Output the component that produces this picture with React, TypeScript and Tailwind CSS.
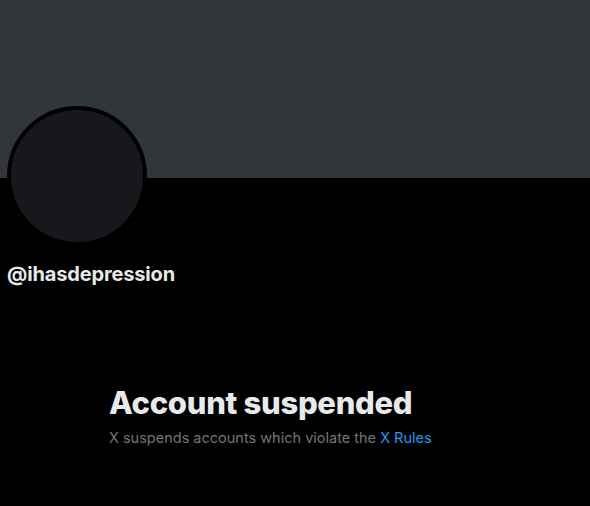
export default function App() {
  return (
    <div className="h-[506px] w-full overflow-hidden bg-black font-['Inter',sans-serif]">
      <div className="h-[178px] bg-[#333639]" />
      <div className="px-[7px]">
        <div className="-mt-[72px] h-[140px] w-[140px] rounded-full border-4 border-black bg-[#16181c]" />
        <div className="mt-[16px] text-[20px] font-bold leading-6 tracking-[-0.15px] text-[#e7e9ea]">
          @ihasdepression
        </div>
      </div>
      <div className="mx-auto mt-[99px] w-[372px]">
        <h1 className="text-[31px] font-extrabold leading-9 tracking-[-0.3px] text-[#e7e9ea]">
          Account suspended
        </h1>
        <p className="mt-[7px] text-[14.5px] leading-5 text-[#71767b]">
          X suspends accounts which violate the{" "}
          <span className="text-[#1d9bf0]">X Rules</span>
        </p>
      </div>
    </div>
  );
}
